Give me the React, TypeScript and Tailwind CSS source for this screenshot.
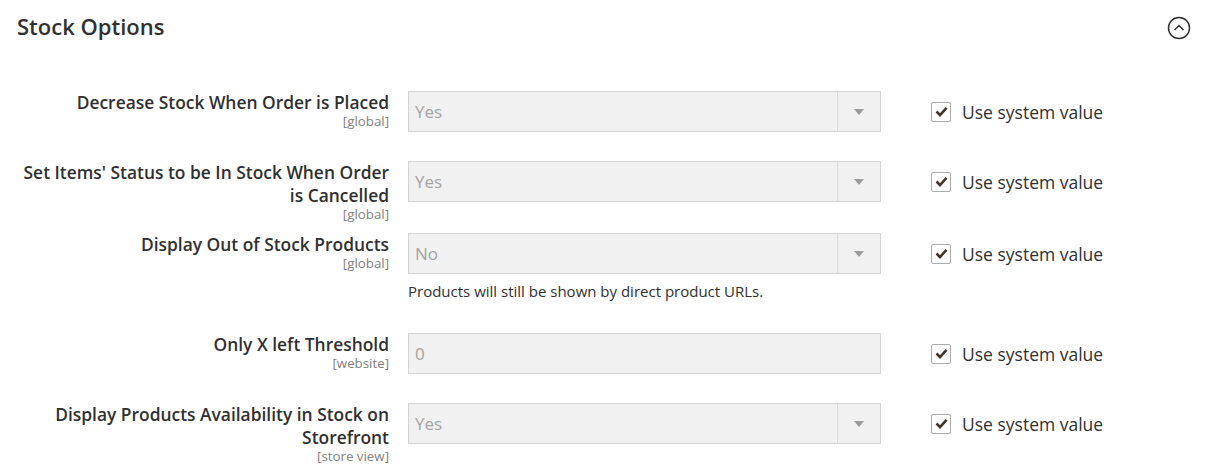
import React from "react";

type Field = {
  label: string;
  scope: string;
  value: string;
  kind: "select" | "input";
  note?: string;
};

const fields: Field[] = [
  { label: "Decrease Stock When Order is Placed", scope: "[global]", value: "Yes", kind: "select" },
  { label: "Set Items' Status to be In Stock When Order is Cancelled", scope: "[global]", value: "Yes", kind: "select" },
  {
    label: "Display Out of Stock Products",
    scope: "[global]",
    value: "No",
    kind: "select",
    note: "Products will still be shown by direct product URLs.",
  },
  { label: "Only X left Threshold", scope: "[website]", value: "0", kind: "input" },
  { label: "Display Products Availability in Stock on Storefront", scope: "[store view]", value: "Yes", kind: "select" },
];

const Control: React.FC<{ field: Field }> = ({ field }) => (
  <div className="flex h-[41px] w-[473px] border border-[#d4d4d4] bg-[#f1f1f1]">
    <div className="flex flex-1 items-center pl-[6px] text-[17px] text-[#a3a3a3]">{field.value}</div>
    {field.kind === "select" && (
      <div className="flex w-[43px] items-center justify-center border-l border-[#dcdcdc]">
        <span className="h-0 w-0 border-x-[5px] border-t-[6px] border-x-transparent border-t-[#9a9a9a]" />
      </div>
    )}
  </div>
);

const SystemValue = () => (
  <label className="flex h-[41px] items-center gap-[11px] text-[17.5px] leading-[20px] text-[#303030]">
    <span className="flex h-[20px] w-[20px] items-center justify-center rounded-[2px] border border-[#adadad] bg-white">
      <svg width="13" height="11" viewBox="0 0 13 11" fill="none">
        <path d="M1.5 5.5 L5 9 L11.5 1.8" stroke="#41362f" strokeWidth="2.6" />
      </svg>
    </span>
    Use system value
  </label>
);

export default function App() {
  return (
    <div className="min-h-[474px] bg-white pl-[17px] pr-[33px] text-[#303030]" style={{ fontFamily: '"Open Sans", sans-serif' }}>
      <div className="flex h-[52px] items-center justify-between">
        <h2 className="text-[22px] font-semibold text-[#303030]">Stock Options</h2>
        <svg width="24" height="24" viewBox="0 0 24 24" fill="none" className="mt-[3px]">
          <circle cx="12" cy="12" r="10.5" stroke="#303030" strokeWidth="1.5" />
          <path d="M7.5 14 L12 9.5 L16.5 14" stroke="#303030" strokeWidth="1.5" />
        </svg>
      </div>

      <div className="mt-[39px] flex flex-col">
        {fields.map((f) => (
          <div key={f.label} className="flex min-h-[70px] items-start">
            <div className="w-[372px] pb-[11px] text-right">
              <div className="text-[17.4px] font-semibold leading-[23px] text-[#303030]">{f.label}</div>
              <div className="text-[13.3px] leading-[15px] text-[#808080]">{f.scope}</div>
            </div>
            <div className="ml-[19px]">
              <Control field={f} />
              {f.note && <p className="mb-[32px] mt-[7px] text-[15px] leading-[20px] text-[#303030]">{f.note}</p>}
            </div>
            <div className="ml-[50px]">
              <SystemValue />
            </div>
          </div>
        ))}
      </div>
    </div>
  );
}
